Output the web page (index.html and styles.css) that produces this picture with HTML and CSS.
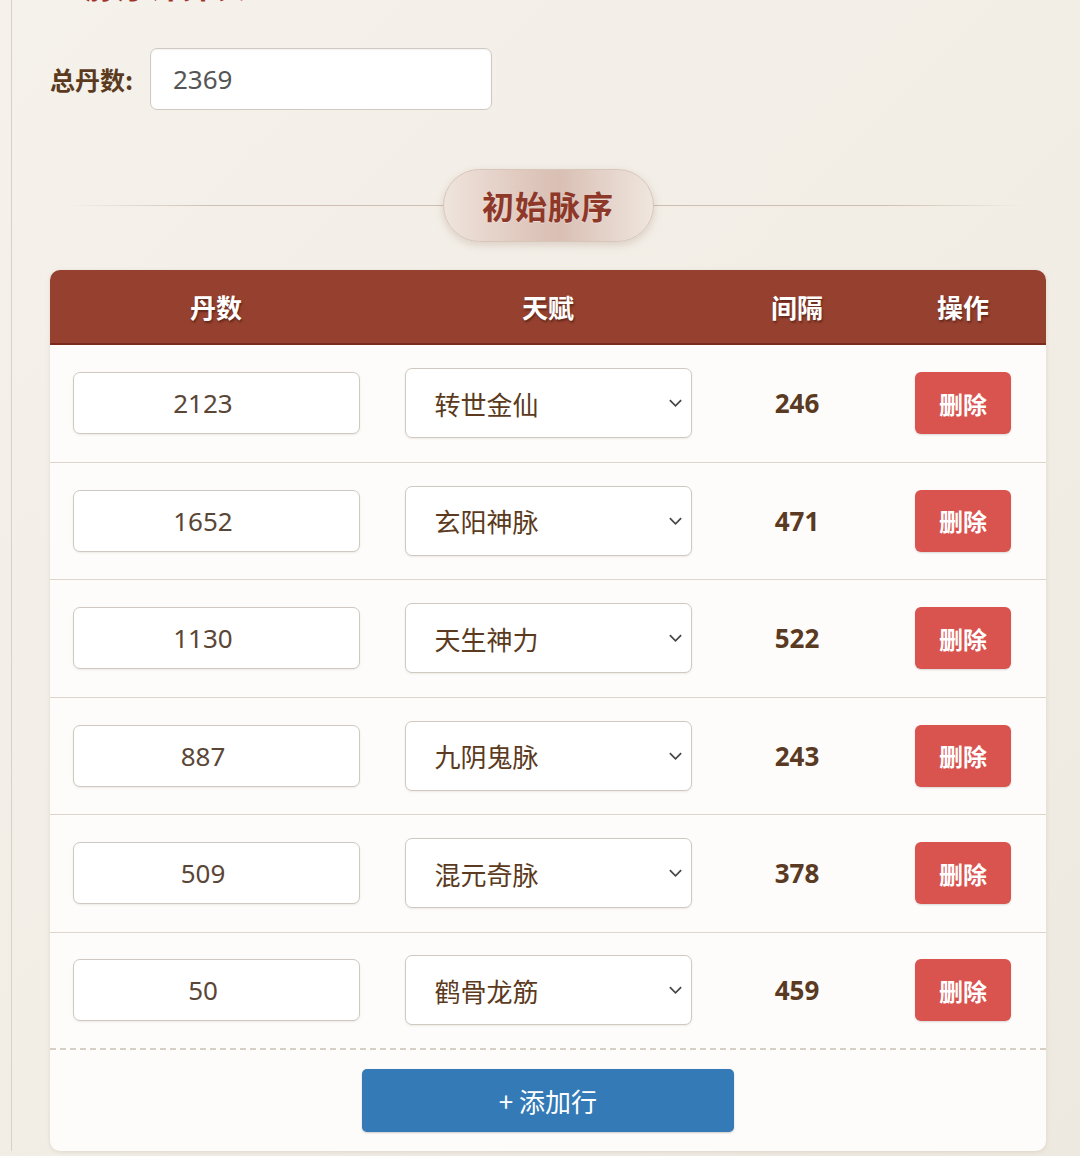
FILE: index.html
```html
<!DOCTYPE html>
<html lang="zh">
<head>
<meta charset="utf-8">
<title>脉序计算</title>
<link rel="stylesheet" href="styles.css">
</head>
<body>
<div class="panel">
  <h2 class="title"><span class="dot">•</span> 脉序计算表</h2>
  <div class="total-row">
    <label class="total-label">总丹数:</label>
    <input class="total-input" type="text" value="2369">
  </div>
  <div class="section-head">
    <span class="pill">初始脉序</span>
  </div>
  <div class="table">
    <div class="thead">
      <div class="th">丹数</div>
      <div class="th">天赋</div>
      <div class="th">间隔</div>
      <div class="th">操作</div>
    </div>
    <div class="row">
      <div class="cell"><input class="num" type="text" value="2123"></div>
      <div class="cell"><select class="sel"><option>转世金仙</option></select></div>
      <div class="cell gap">246</div>
      <div class="cell"><button class="del">删除</button></div>
    </div>
    <div class="row">
      <div class="cell"><input class="num" type="text" value="1652"></div>
      <div class="cell"><select class="sel"><option>玄阳神脉</option></select></div>
      <div class="cell gap">471</div>
      <div class="cell"><button class="del">删除</button></div>
    </div>
    <div class="row">
      <div class="cell"><input class="num" type="text" value="1130"></div>
      <div class="cell"><select class="sel"><option>天生神力</option></select></div>
      <div class="cell gap">522</div>
      <div class="cell"><button class="del">删除</button></div>
    </div>
    <div class="row">
      <div class="cell"><input class="num" type="text" value="887"></div>
      <div class="cell"><select class="sel"><option>九阴鬼脉</option></select></div>
      <div class="cell gap">243</div>
      <div class="cell"><button class="del">删除</button></div>
    </div>
    <div class="row">
      <div class="cell"><input class="num" type="text" value="509"></div>
      <div class="cell"><select class="sel"><option>混元奇脉</option></select></div>
      <div class="cell gap">378</div>
      <div class="cell"><button class="del">删除</button></div>
    </div>
    <div class="row last">
      <div class="cell"><input class="num" type="text" value="50"></div>
      <div class="cell"><select class="sel"><option>鹤骨龙筋</option></select></div>
      <div class="cell gap">459</div>
      <div class="cell"><button class="del">删除</button></div>
    </div>
    <div class="foot">
      <button class="add">+ 添加行</button>
    </div>
  </div>
</div>
</body>
</html>
```

FILE: styles.css
```css
* { box-sizing: border-box; }
html, body {
  margin: 0;
  padding: 0;
  height: 1156px;
  overflow: hidden;
}
body {
  background: linear-gradient(135deg, #f5f1eb 0%, #f2eee6 50%, #eee9e0 100%);
  font-family: "Noto Sans", "Noto Sans CJK SC", sans-serif;
  color: #5a3a22;
}
.panel {
  margin-left: 11px;
  border-left: 1px solid #d9d1c5;
  padding: 0 0 0 38px;
  width: 1035px;
  min-height: 1156px;
}
.title {
  margin: -34px 0 0 0;
  height: 36px;
  font-size: 32px;
  line-height: 36px;
  font-weight: 700;
  color: #a0342a;
  font-family: "Noto Sans CJK SC", sans-serif;
}
.title .dot { color: #5a3a22; font-size: 24px; margin-right: 4px; }
.total-row {
  display: flex;
  align-items: center;
  margin-top: 46px;
}
.total-label {
  font-size: 25px;
  font-weight: 700;
  color: #5b3a1e;
  font-family: "Noto Sans CJK SC", sans-serif;
  width: 100px;
}
.total-input {
  width: 342px;
  height: 62px;
  border: 1.5px solid #d0c9c1;
  border-radius: 7px;
  background: #fff;
  padding: 0 22px;
  font-family: "Noto Sans", "Noto Sans CJK SC", sans-serif;
  font-size: 26px;
  color: #555;
  outline: none;
  box-shadow: inset 0 1px 2px rgba(0,0,0,0.05);
}
.section-head {
  position: relative;
  display: flex;
  justify-content: center;
  margin: 59px 0 0 0;
  width: 996px;
}
.section-head::before {
  content: "";
  position: absolute;
  left: 20px;
  right: 20px;
  top: 36px;
  height: 1px;
  background: linear-gradient(90deg, rgba(200,185,170,0) 0%, #cdbfb1 15%, #cdbfb1 85%, rgba(200,185,170,0) 100%);
}
.pill {
  position: relative;
  width: 211px;
  height: 73px;
  border-radius: 37px;
  border: 1.5px solid #d7c6ba;
  background: linear-gradient(90deg, #efe4dc 0%, #dfc7bd 40%, #d9bfb4 55%, #e8d9d0 85%, #efe6de 100%);
  box-shadow: 0 3px 8px rgba(150,110,90,0.25);
  display: flex;
  align-items: center;
  justify-content: center;
  font-family: "Noto Sans CJK SC", sans-serif;
  font-size: 32px;
  font-weight: 700;
  color: #8e3829;
  letter-spacing: 1px;
  padding-bottom: 2px;
  text-shadow: 0 1px 1px rgba(255,255,255,0.4);
}
.table {
  margin-top: 28px;
  width: 996px;
  background: #fdfcfa;
  border-radius: 10px;
  box-shadow: 0 1px 4px rgba(120,90,60,0.15);
  overflow: hidden;
}
.thead {
  display: grid;
  grid-template-columns: 2fr 2fr 1fr 1fr;
  height: 75px;
  background: #96412f;
  border-bottom: 2px solid #7a2a1d;
}
.th {
  display: flex;
  align-items: center;
  justify-content: center;
  color: #fff;
  font-family: "Noto Sans CJK SC", sans-serif;
  font-size: 26px;
  font-weight: 700;
  text-shadow: 1px 2px 2px rgba(60,20,10,0.55);
}
.row {
  display: grid;
  grid-template-columns: 2fr 2fr 1fr 1fr;
  height: 117.5px;
  border-bottom: 1.5px solid #ddd4ca;
}
.row.last {
  border-bottom: 2px dashed #d6cfc6;
}
.cell {
  display: flex;
  align-items: center;
  justify-content: center;
  padding: 0 22px;
}
.num {
  width: 287px;
  height: 62px;
  border: 1.5px solid #d0c9c1;
  border-radius: 7px;
  background: #fff;
  text-align: center;
  padding: 0 26px 0 0;
  font-family: "Noto Sans", sans-serif;
  font-size: 26px;
  color: #5a4636;
  outline: none;
  box-shadow: 0 1px 2px rgba(120,100,80,0.12);
}
.sel {
  width: 287px;
  height: 70px;
  border: 1.5px solid #d0c9c1;
  border-radius: 7px;
  background-color: #fff;
  background-image: url("data:image/svg+xml;utf8,<svg xmlns='http://www.w3.org/2000/svg' width='16' height='10' viewBox='0 0 16 10'><path d='M2 2 L8 8 L14 2' fill='none' stroke='%23444' stroke-width='1.8'/></svg>");
  background-repeat: no-repeat;
  background-position: right 8px center;
  background-size: 15px 10px;
  -webkit-appearance: none;
  appearance: none;
  padding: 0 0 0 29px;
  font-family: "Noto Sans CJK SC", sans-serif;
  font-size: 26px;
  color: #5b3a20;
  outline: none;
  box-shadow: 0 1px 2px rgba(120,100,80,0.12);
}
.gap {
  font-family: "Noto Sans", sans-serif;
  font-size: 26px;
  font-weight: 700;
  color: #5a3a22;
}
.del {
  width: 96px;
  height: 62px;
  border: none;
  border-radius: 6px;
  background: #d9534f;
  color: #fff;
  font-family: "Noto Sans CJK SC", sans-serif;
  font-size: 24px;
  font-weight: 700;
  box-shadow: 0 1px 2px rgba(0,0,0,0.15);
}
.foot {
  display: flex;
  justify-content: center;
  padding: 19px 0 19px 0;
}
.add {
  width: 372px;
  height: 63px;
  border: none;
  border-radius: 5px;
  background: #337ab7;
  color: #fff;
  font-family: "Noto Sans CJK SC", sans-serif;
  font-size: 26px;
  box-shadow: 0 1px 2px rgba(0,0,0,0.2);
}
```
